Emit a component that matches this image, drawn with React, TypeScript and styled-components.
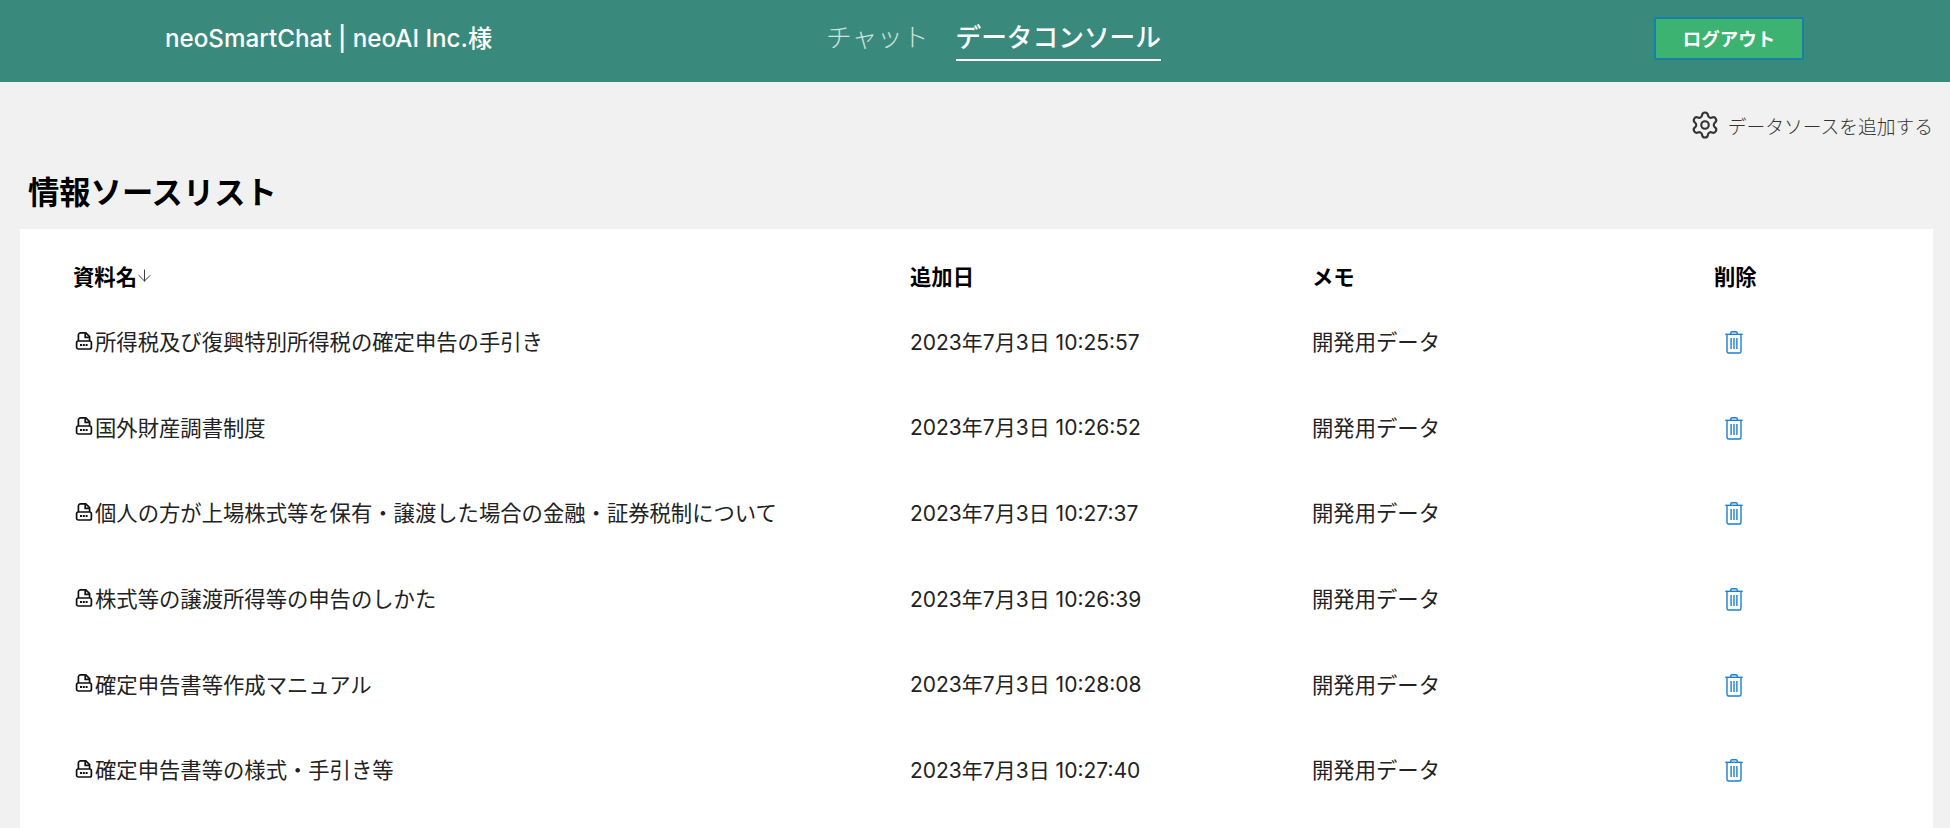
import React from "react";
import styled, { createGlobalStyle } from "styled-components";
import { Settings, ArrowDown } from "lucide-react";

const Global = createGlobalStyle`
  html, body { margin: 0; padding: 0; height: 100%; overflow: hidden; background: #f1f1f1; }
  body { font-family: Inter, "Noto Sans CJK JP", sans-serif; color: #1a1a1a; }
`;

const Page = styled.div`
  width: 1950px;
  height: 828px;
  overflow: hidden;
  display: flex;
  flex-direction: column;
`;

const Header = styled.header`
  height: 82px;
  box-sizing: border-box;
  padding-bottom: 6px;
  background: #398a7c;
  display: grid;
  grid-template-columns: 826px 828px 296px;
  align-items: center;
  flex-shrink: 0;
`;

const Brand = styled.div`
  padding-left: 165px;
  margin-bottom: 4px;
  color: #fff;
  font-size: 24.2px;
  font-weight: 500;
`;

const Nav = styled.nav`
  display: flex;
  align-items: center;
  gap: 27px;
  margin-top: 3px;
`;

const NavItem = styled.a<{ $active?: boolean }>`
  font-size: 25.7px;
  line-height: 38px;
  padding-bottom: 2px;
  color: ${(p) => (p.$active ? "#fff" : "#cfe3df")};
  font-weight: ${(p) => (p.$active ? 500 : 300)};
  border-bottom: 2px solid ${(p) => (p.$active ? "#fff" : "transparent")};
`;

const LogoutButton = styled.button`
  width: 150px;
  height: 43px;
  padding: 0;
  background: #3cb371;
  border: 2px solid #1a7fa8;
  border-radius: 2px;
  color: #fff;
  font: 600 18.5px Inter, "Noto Sans CJK JP", sans-serif;
`;

const Main = styled.main`
  flex: 1;
  padding: 0 17px 0 20px;
  display: flex;
  flex-direction: column;
`;

const ActionBar = styled.div`
  height: 86px;
  display: flex;
  justify-content: flex-end;
  align-items: center;
  gap: 8px;
  color: #333;
  font-size: 18.75px;
  font-weight: 300;
`;

const Title = styled.h1`
  margin: 0;
  padding-left: 8px;
  height: 61px;
  font-size: 31.3px;
  line-height: 50px;
  font-weight: 700;
  color: #000;
`;

const Card = styled.section`
  background: #fff;
  flex: 1;
  padding: 23px 53px 0;
`;

const Row = styled.div<{ $head?: boolean }>`
  display: grid;
  grid-template-columns: 837px 402px 402px 1fr;
  align-items: center;
  height: ${(p) => (p.$head ? "46px" : "85.6px")};
  font-size: 21.33px;
  font-weight: ${(p) => (p.$head ? 700 : 400)};
  color: ${(p) => (p.$head ? "#000" : "#222")};
`;

const NameCell = styled.div`
  display: flex;
  align-items: center;
`;

const SortArrow = styled(ArrowDown)`
  margin-left: -2px;
`;

const DateCell = styled.div`
  font-size: 21px;
`;

const DocIcon = styled.svg`
  width: 18px;
  height: 18px;
  margin: 0 2px 0 2px;
  flex-shrink: 0;
`;

const TrashIcon = styled.svg`
  width: 18px;
  height: 23px;
  display: block;
`;

const Delete = styled.div`
  display: flex;
  padding-left: 11px;
  margin-top: 4px;
`;

const rows = [
  ["所得税及び復興特別所得税の確定申告の手引き", "2023年7月3日 10:25:57"],
  ["国外財産調書制度", "2023年7月3日 10:26:52"],
  ["個人の方が上場株式等を保有・譲渡した場合の金融・証券税制について", "2023年7月3日 10:27:37"],
  ["株式等の譲渡所得等の申告のしかた", "2023年7月3日 10:26:39"],
  ["確定申告書等作成マニュアル", "2023年7月3日 10:28:08"],
  ["確定申告書等の様式・手引き等", "2023年7月3日 10:27:40"],
];

const PdfIcon = () => (
  <DocIcon viewBox="0 0 18 18" fill="none" stroke="#111" strokeWidth="1.7">
    <path d="M3.4 9V3C3.4 1.8 4.4 .9 5.6 .9H10.8L14.6 4.7V9" />
    <path d="M10.2 1.2V5.4H14.6" />
    <rect x="1.6" y="9" width="14.8" height="8" rx="1.8" />
    <path d="M5 13h8" strokeWidth="2.2" strokeDasharray="2 .8" />
  </DocIcon>
);

const Trash = () => (
  <TrashIcon viewBox="0 0 18 23" fill="none" stroke="#1f7fd0" strokeWidth="1.4">
    <path d="M0.3 3.3H17.7" />
    <path d="M5.7 3.3V2.2C5.7 1.3 6.3 .8 7.1 .8H10.9C11.7 .8 12.3 1.3 12.3 2.2V3.3" />
    <path d="M2 3.3V20.2C2 21.2 2.7 22 3.7 22H14.3C15.3 22 16 21.2 16 20.2V3.3" />
    <path d="M6.1 7V18M9 7V18M11.9 7V18" />
  </TrashIcon>
);

export default function App() {
  return (
    <Page>
      <Global />
      <Header>
        <Brand>neoSmartChat | neoAI Inc.様</Brand>
        <Nav>
          <NavItem>チャット</NavItem>
          <NavItem $active>データコンソール</NavItem>
        </Nav>
        <LogoutButton>ログアウト</LogoutButton>
      </Header>
      <Main>
        <ActionBar>
          <Settings size={30} strokeWidth={1.7} color="#333" />
          データソースを追加する
        </ActionBar>
        <Title>情報ソースリスト</Title>
        <Card>
          <Row $head>
            <NameCell>
              資料名
              <SortArrow size={19} strokeWidth={1.2} color="#333" />
            </NameCell>
            <div>追加日</div>
            <div>メモ</div>
            <div>削除</div>
          </Row>
          {rows.map(([name, date]) => (
            <Row key={name}>
              <NameCell>
                <PdfIcon />
                {name}
              </NameCell>
              <DateCell>{date}</DateCell>
              <div>開発用データ</div>
              <Delete>
                <Trash />
              </Delete>
            </Row>
          ))}
        </Card>
      </Main>
    </Page>
  );
}
